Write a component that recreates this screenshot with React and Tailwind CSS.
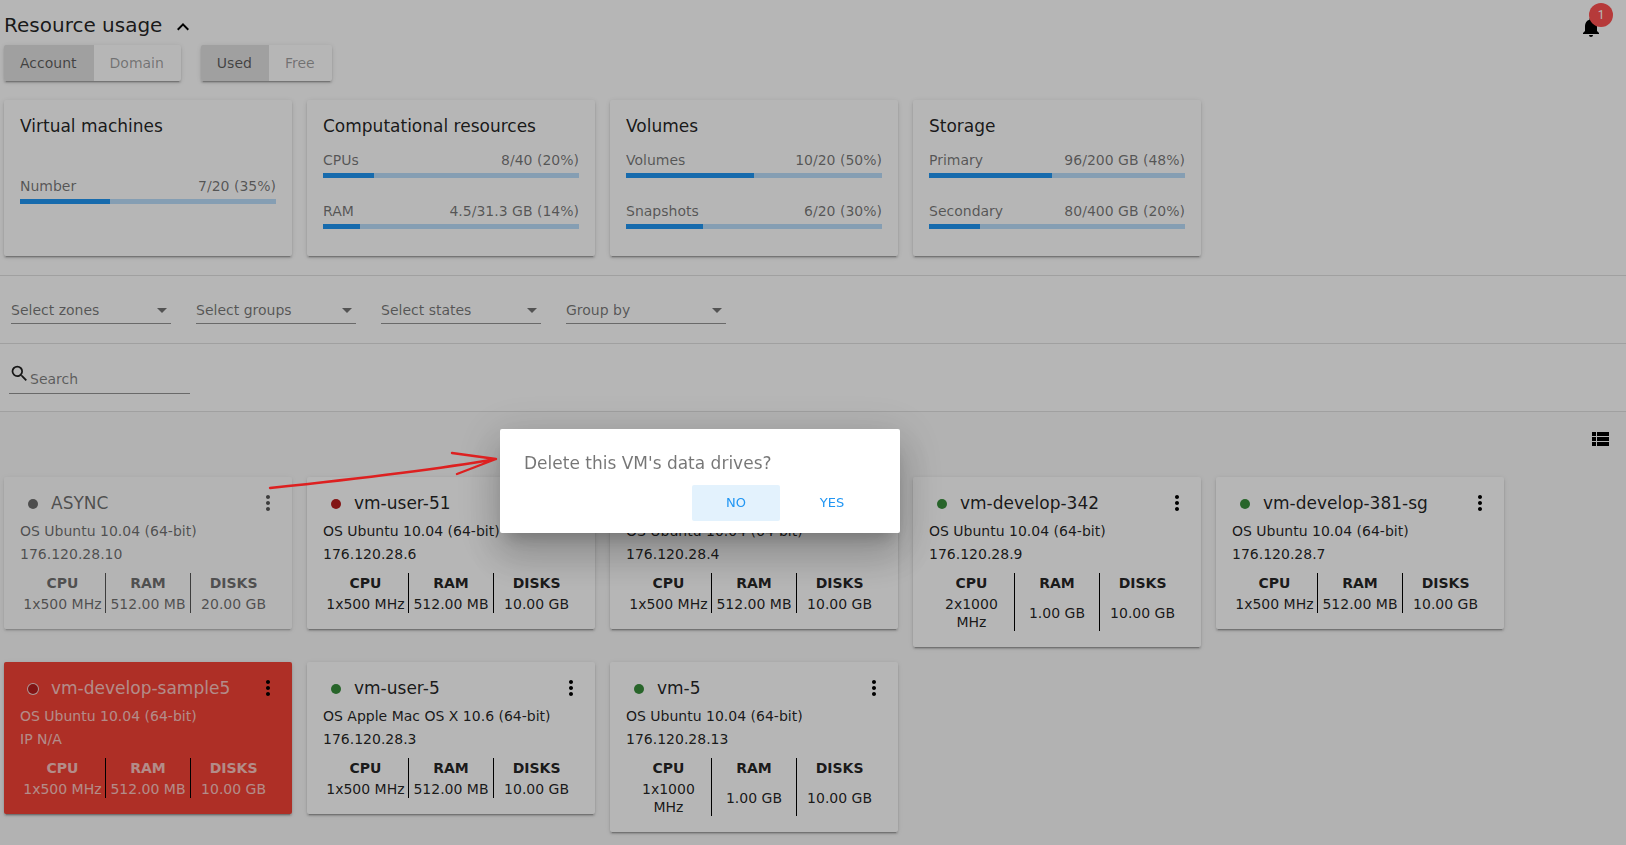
import React from "react";
import { MdKeyboardArrowUp, MdNotifications, MdMoreVert, MdSearch } from "react-icons/md";

const cardShadow =
  "shadow-[0_3px_1px_-2px_rgba(0,0,0,0.2),0_2px_2px_0_rgba(0,0,0,0.14),0_1px_5px_0_rgba(0,0,0,0.12)]";

const usage = [
  { title: "Virtual machines", rows: [["Number", "7/20 (35%)", 35]] },
  { title: "Computational resources", rows: [["CPUs", "8/40 (20%)", 20], ["RAM", "4.5/31.3 GB (14%)", 14.4]] },
  { title: "Volumes", rows: [["Volumes", "10/20 (50%)", 50], ["Snapshots", "6/20 (30%)", 30]] },
  { title: "Storage", rows: [["Primary", "96/200 GB (48%)", 48], ["Secondary", "80/400 GB (20%)", 20]] },
];

const vms = [
  { name: "ASYNC", os: "OS Ubuntu 10.04 (64-bit)", ip: "176.120.28.10", cpu: "1x500 MHz", ram: "512.00 MB", disks: "20.00 GB", status: "busy" },
  { name: "vm-user-51", os: "OS Ubuntu 10.04 (64-bit)", ip: "176.120.28.6", cpu: "1x500 MHz", ram: "512.00 MB", disks: "10.00 GB", status: "stopped" },
  { name: "vm-4", os: "OS Ubuntu 10.04 (64-bit)", ip: "176.120.28.4", cpu: "1x500 MHz", ram: "512.00 MB", disks: "10.00 GB", status: "running" },
  { name: "vm-develop-342", os: "OS Ubuntu 10.04 (64-bit)", ip: "176.120.28.9", cpu: "2x1000 MHz", ram: "1.00 GB", disks: "10.00 GB", status: "running" },
  { name: "vm-develop-381-sg", os: "OS Ubuntu 10.04 (64-bit)", ip: "176.120.28.7", cpu: "1x500 MHz", ram: "512.00 MB", disks: "10.00 GB", status: "running" },
  { name: "vm-develop-sample5", os: "OS Ubuntu 10.04 (64-bit)", ip: "IP N/A", cpu: "1x500 MHz", ram: "512.00 MB", disks: "10.00 GB", status: "error" },
  { name: "vm-user-5", os: "OS Apple Mac OS X 10.6 (64-bit)", ip: "176.120.28.3", cpu: "1x500 MHz", ram: "512.00 MB", disks: "10.00 GB", status: "running" },
  { name: "vm-5", os: "OS Ubuntu 10.04 (64-bit)", ip: "176.120.28.13", cpu: "1x1000 MHz", ram: "1.00 GB", disks: "10.00 GB", status: "running" },
];

const dots = {
  busy: "size-[10px] bg-black/87",
  stopped: "size-[10px] bg-[#b71c1c]",
  running: "size-[10px] bg-[#388e3c]",
  error: "size-3 -mx-px border border-white/80 bg-[#b71c1c]",
};

function Toggle({ label, options }) {
  return (
    <div role="group" aria-label={label} className={`flex overflow-hidden rounded-xs bg-white ${cardShadow}`}>
      {options.map((o, i) => (
        <button
          key={o}
          type="button"
          aria-pressed={i === 0}
          className={
            i === 0
              ? "h-9 bg-[#e0e0e0] pr-[17px] pl-4 text-sm text-black/60"
              : "h-9 pr-[17px] pl-4 text-sm text-black/38"
          }
        >
          {o}
        </button>
      ))}
    </div>
  );
}

function UsageCard({ title, rows }) {
  return (
    <section className={`flex h-[156px] w-72 flex-col rounded-xs bg-white px-4 pt-4 pb-6 ${cardShadow}`}>
      <h2 className="text-[17px] leading-5 text-black/87">{title}</h2>
      <div className="flex flex-1 flex-col justify-center gap-6 pt-3">
        {rows.map(([name, text, pct]) => (
          <div key={name}>
            <div className="flex justify-between pb-1 text-sm leading-[18px] text-black/54">
              <span>{name}</span>
              <span>{text}</span>
            </div>
            <div className="h-[5px] bg-[#bbdefb]">
              <div className="h-full bg-[#2196f3]" style={{ width: `${pct}%` }} />
            </div>
          </div>
        ))}
      </div>
    </section>
  );
}

function Filter({ label }) {
  return (
    <div className="relative w-40">
      <select aria-label={label} className="block h-7 w-full appearance-none border-b border-black/42 bg-transparent text-sm text-black/54">
        <option>{label}</option>
      </select>
      <svg viewBox="0 0 10 5" className="pointer-events-none absolute top-3 right-1 h-[5px] w-[10px] fill-black/54" aria-hidden="true">
        <path d="M0 0h10L5 5z" />
      </svg>
    </div>
  );
}

function VmCard({ vm }) {
  const error = vm.status === "error";
  const tone = error ? "bg-[#f44336] text-white/70" : "bg-white text-black/87";
  const line = "border-r border-black";
  return (
    <article className={`w-72 rounded-xs px-4 pt-3 pb-4 ${tone} ${cardShadow} ${vm.status === "busy" ? "opacity-65" : ""}`}>
      <header className="flex h-7 items-center pl-2">
        <span className={`mt-0.5 shrink-0 rounded-full ${dots[vm.status]}`} />
        <h3 className="flex-1 pl-[13px] text-[17px] leading-7">{vm.name}</h3>
        <button type="button" aria-label={`Actions for ${vm.name}`} className="-mr-1 text-black">
          <MdMoreVert className="size-6" />
        </button>
      </header>
      <p className="pt-[3px] text-sm leading-[23px]">{vm.os}</p>
      <p className="text-sm leading-[23px]">{vm.ip}</p>
      <table className="mt-[7px] w-full table-fixed text-center text-sm">
        <thead>
          <tr className="leading-5">
            <th className={`p-0 pb-0.5 ${line}`}>CPU</th>
            <th className={`p-0 pb-0.5 ${line}`}>RAM</th>
            <th className="p-0 pb-0.5">DISKS</th>
          </tr>
        </thead>
        <tbody>
          <tr className="leading-[18px]">
            <td className={`p-0 ${line}`}>{vm.cpu}</td>
            <td className={`p-0 ${line}`}>{vm.ram}</td>
            <td className="p-0">{vm.disks}</td>
          </tr>
        </tbody>
      </table>
    </article>
  );
}

export default function App() {
  return (
    <div className="relative min-h-screen bg-[#fafafa] font-['DejaVu_Sans',sans-serif] text-black/87">
      <div className="bg-white">
        <header className="flex items-start justify-between pr-[23px] pl-1">
          <div className="flex h-[45px] items-center gap-[9px] pt-1">
            <h1 className="text-xl leading-7">Resource usage</h1>
            <button type="button" aria-label="Collapse resource usage" className="pt-1 text-black">
              <MdKeyboardArrowUp className="size-6" />
            </button>
          </div>
          <button type="button" aria-label="Notifications" className="relative mt-[15px] text-black">
            <MdNotifications className="size-6" />
            <span className="absolute -top-3 left-[10px] flex size-6 items-center justify-center rounded-full bg-[#ff5252] font-['Roboto',sans-serif] text-xs text-white">1</span>
          </button>
        </header>
        <div className="flex gap-5 px-1">
          <Toggle label="Scope" options={["Account", "Domain"]} />
          <Toggle label="Mode" options={["Used", "Free"]} />
        </div>
        <div className="flex flex-wrap gap-[15px] px-1 pt-[19px] pb-[19px]">
          {usage.map((u) => (
            <UsageCard key={u.title} {...u} />
          ))}
        </div>
        <div className="flex flex-wrap gap-[25px] border-y border-black/12 px-[11px] pt-5 pb-[19px]">
          {["Select zones", "Select groups", "Select states", "Group by"].map((l) => (
            <Filter key={l} label={l} />
          ))}
        </div>
        <div className="border-b border-black/12 px-[9px] pt-[19px] pb-[17px]">
          <label className="flex h-[31px] w-[181px] items-start border-b border-black/42">
            <MdSearch className="size-[21px] shrink-0" />
            <input type="text" aria-label="Search" placeholder="Search" className="mt-1 h-6 w-full min-w-0 bg-transparent text-sm outline-none placeholder:text-black/50" />
          </label>
        </div>
      </div>
      <main className="pb-3">
        <div className="flex h-[65px] items-start justify-end pt-[15px] pr-[14px]">
          <button type="button" aria-label="List view" className="text-black">
            <svg viewBox="0 0 24 24" className="size-6 fill-current" aria-hidden="true">
              <path d="M9 5v4h12V5M9 19h12v-4H9M9 14h12v-4H9M4 9h4V5H4M4 19h4v-4H4M4 14h4v-4H4z" />
            </svg>
          </button>
        </div>
        <div className="flex flex-wrap items-start gap-[15px] px-1">
          {vms.map((vm) => (
            <VmCard key={vm.name} vm={vm} />
          ))}
        </div>
      </main>
      <div className="fixed inset-0 flex items-center justify-center bg-black/[0.288] pt-[117px] pr-[226px]">
        <div role="dialog" aria-modal="true" aria-labelledby="confirm-title" className="w-[400px] rounded-xs bg-white px-6 pt-5 pb-3 shadow-[0_11px_15px_-7px_rgba(0,0,0,0.2),0_24px_38px_3px_rgba(0,0,0,0.14),0_9px_46px_8px_rgba(0,0,0,0.12)]">
          <p id="confirm-title" className="text-[17px] leading-7 text-black/54">Delete this VM's data drives?</p>
          <div className="flex justify-end gap-2 pt-2">
            <button type="button" className="h-9 w-[88px] rounded-xs bg-[#e3f2fd] text-[13px] text-[#2196f3]">NO</button>
            <button type="button" className="h-9 w-[88px] rounded-xs text-[13px] text-[#2196f3]">YES</button>
          </div>
        </div>
      </div>
      <svg viewBox="0 0 232 44" className="pointer-events-none absolute top-[449px] left-[267px] h-11 w-[232px]" fill="none" stroke="#dd2020" strokeWidth="2.4" strokeLinecap="round" strokeLinejoin="round" aria-hidden="true">
        <path d="M3 39C70 32 160 22 229 10M185 4L229 10L190 25" />
      </svg>
    </div>
  );
}
